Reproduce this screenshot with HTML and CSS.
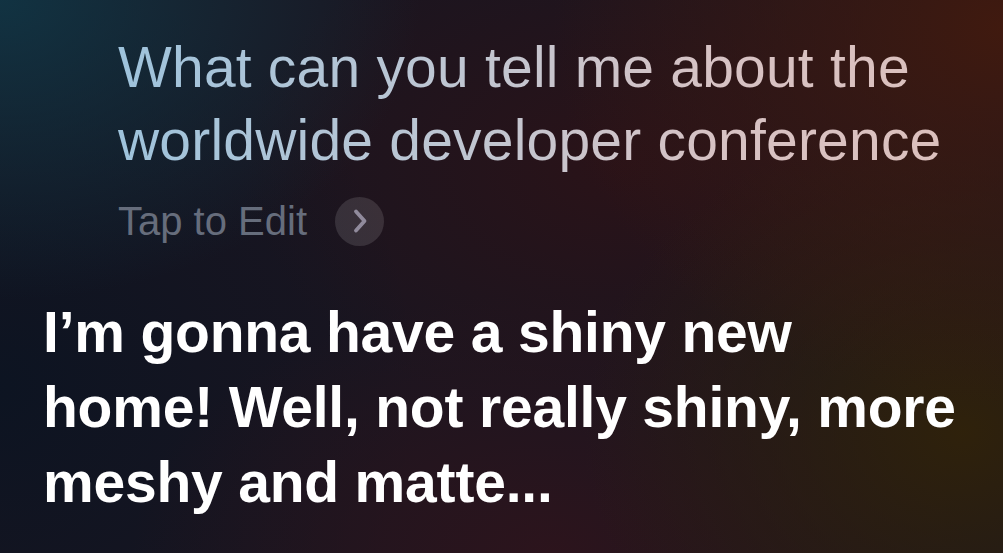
FILE: index.html
```html
<!DOCTYPE html>
<html lang="en">
<head>
    <meta charset="UTF-8">
    <meta name="viewport" content="width=device-width, initial-scale=1.0">
    <title>Siri</title>
    <link rel="stylesheet" href="styles.css">
</head>
<body>

    <div class="siri-screen">
        <div class="request">
            <p class="request-text">What can you tell me about the worldwide developer conference</p>
            <div class="edit-row">
                <span class="edit-label">Tap to Edit</span>
                <span class="edit-btn">
                    <svg width="49" height="49" viewBox="0 0 49 49">
                        <polyline points="21,14.5 29.5,24 21,33.5" fill="none" stroke="#918b9c" stroke-width="3.8" stroke-linecap="round" stroke-linejoin="round"/>
                    </svg>
                </span>
            </div>
        </div>

        <p class="answer">I&rsquo;m gonna have a shiny new<br>home! Well, not really shiny, more<br>meshy and matte...</p>
    </div>

</body>
</html>
```

FILE: styles.css
```css
html, body {
    margin: 0;
    padding: 0;
}
body {
    font-family: "Liberation Sans", Arial, sans-serif;
    width: 1003px;
    height: 553px;
    overflow: hidden;
    background-color: #1a1520;
    background-image:
        radial-gradient(ellipse 420px 300px at 0% 0%, rgba(16, 56, 72, 0.85), rgba(16, 56, 72, 0) 100%),
        radial-gradient(ellipse 450px 380px at 100% 5%, rgba(66, 26, 14, 0.95), rgba(66, 26, 14, 0) 100%),
        radial-gradient(ellipse 380px 320px at 96% 78%, rgba(48, 34, 10, 0.95), rgba(48, 34, 10, 0) 100%),
        radial-gradient(ellipse 420px 260px at 55% 100%, rgba(46, 20, 28, 0.9), rgba(46, 20, 28, 0) 100%),
        radial-gradient(ellipse 420px 420px at 0% 70%, rgba(12, 20, 34, 0.95), rgba(12, 20, 34, 0) 100%),
        radial-gradient(ellipse 380px 260px at 62% 30%, rgba(46, 18, 22, 0.8), rgba(46, 18, 22, 0) 100%);
}
.siri-screen {
    height: 100%;
    box-sizing: border-box;
    padding-top: 31px;
}
.request {
    padding-left: 118px;
    padding-right: 40px;
}
.request-text {
    margin: 0;
    font-size: 57px;
    line-height: 73px;
    letter-spacing: 0.2px;
    background-image: linear-gradient(90deg, #9ec3dc 0%, #bfc6d2 40%, #d6c2c4 70%, #dcc0bc 100%);
    -webkit-background-clip: text;
    background-clip: text;
    color: transparent;
}
.edit-row {
    display: flex;
    align-items: center;
    gap: 28px;
    margin-top: 20px;
}
.edit-label {
    font-size: 40px;
    line-height: 49px;
    color: #666d7c;
}
.edit-btn {
    width: 49px;
    height: 49px;
    border-radius: 50%;
    background-color: rgba(255, 255, 255, 0.12);
    display: flex;
}
.answer {
    margin: 49px 0 0 43px;
    font-size: 57px;
    font-weight: bold;
    line-height: 75px;
    letter-spacing: -0.2px;
    color: #fff;
}
```
